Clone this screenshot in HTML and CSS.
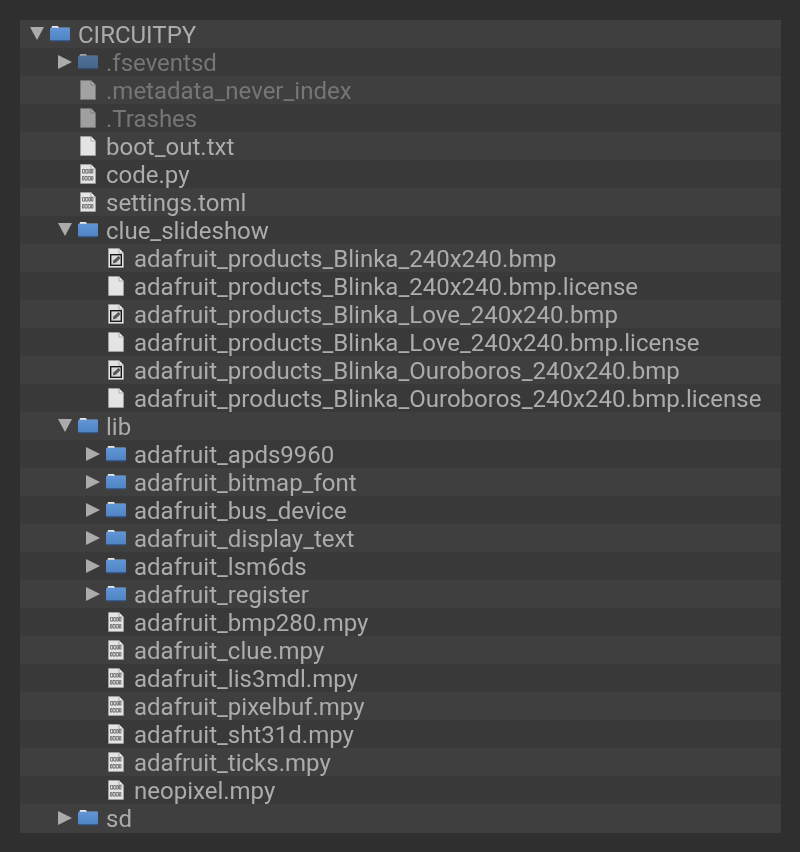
FILE: index.html
```html
<!DOCTYPE html>
<html lang="en">
<head>
<meta charset="utf-8">
<title>CIRCUITPY</title>
<link rel="stylesheet" href="styles.css">
</head>
<body>
<svg class="defs" width="0" height="0" aria-hidden="true">
  <defs>
    <linearGradient id="fg" x1="0" y1="0" x2="0" y2="1">
      <stop offset="0" stop-color="#6195d6"/>
      <stop offset="1" stop-color="#4f82c2"/>
    </linearGradient>
    <symbol id="folder" viewBox="0 0 20 16">
      <path d="M8 1h11a1 1 0 0 1 1 1v1H8z" fill="#6a6a6a"/>
      <path d="M2 0h6l1 2H1.500z" fill="#e6e6e6"/>
      <path d="M0 3a1.200 1.200 0 0 1 1.200-1.200h17.600A1.200 1.200 0 0 1 20 3v10.800a1.200 1.200 0 0 1-1.200 1.200H1.200A1.200 1.200 0 0 1 0 13.800z" fill="url(#fg)"/>
      <path d="M0 14.300h20a1.200 1.200 0 0 1-1.200 1.100H1.200A1.200 1.200 0 0 1 0 14.300z" fill="#30507c"/>
    </symbol>
    <symbol id="file" viewBox="0 0 16 20">
      <path d="M.5.500h10.300l4.700 4.700v14.300H.5z" fill="#e4e4e4" stroke="#a8a8a8" stroke-width=".6"/>
      <path d="M11 .5v4.500h4.500" fill="#f4f4f4" stroke="#9a9a9a" stroke-width=".8"/>
    </symbol>
    <symbol id="bin" viewBox="0 0 16 20">
      <path d="M.5.500h10.300l4.700 4.700v14.300H.5z" fill="#e4e4e4" stroke="#a8a8a8" stroke-width=".6"/>
      <path d="M11 .5v4.500h4.500" fill="#f4f4f4" stroke="#9a9a9a" stroke-width=".8"/>
      <path d="M2.500 5.500h2.200v3.600H2.500zM5.700 5.500h2.200v3.600H5.700zM8.900 5.500h1.500v3.600H8.900zM11.400 5.500h1.500v3.600h-1.500zM2.500 12.500h1.500v3.600H2.500zM5 12.500h2.200v3.600H5zM8.200 12.500h2.200v3.600H8.200zM11.400 12.500h1.500v3.600h-1.500z" fill="none" stroke="#666" stroke-width=".85"/>
    </symbol>
    <symbol id="img" viewBox="0 0 16 20">
      <path d="M.5.500h10.300l4.700 4.700v14.300H.5z" fill="#e4e4e4" stroke="#a8a8a8" stroke-width=".6"/>
      <path d="M11 .5v4.500h4.500" fill="#f4f4f4" stroke="#9a9a9a" stroke-width=".8"/>
      <rect x="2.700" y="6.700" width="10.600" height="10.600" fill="#d8d8d8" stroke="#0c0c0c" stroke-width="1.300"/>
      <path d="M4.800 15.400l.8-3.200L10.600 8l2 2-4.400 4.600z" fill="#555"/>
    </symbol>
  </defs>
</svg>
<ul class="tree">
  <li class="row l0"><span class="arrow down"></span><svg class="ico-folder"><use href="#folder"/></svg><span class="name">CIRCUITPY</span></li>
  <li class="row l1 hidden"><span class="arrow right"></span><svg class="ico-folder"><use href="#folder"/></svg><span class="name">.fseventsd</span></li>
  <li class="row l1 hidden"><span class="arrow"></span><svg class="ico-file"><use href="#file"/></svg><span class="name">.metadata_never_index</span></li>
  <li class="row l1 hidden"><span class="arrow"></span><svg class="ico-file"><use href="#file"/></svg><span class="name">.Trashes</span></li>
  <li class="row l1"><span class="arrow"></span><svg class="ico-file"><use href="#file"/></svg><span class="name">boot_out.txt</span></li>
  <li class="row l1"><span class="arrow"></span><svg class="ico-file"><use href="#bin"/></svg><span class="name">code.py</span></li>
  <li class="row l1"><span class="arrow"></span><svg class="ico-file"><use href="#bin"/></svg><span class="name">settings.toml</span></li>
  <li class="row l1"><span class="arrow down"></span><svg class="ico-folder"><use href="#folder"/></svg><span class="name">clue_slideshow</span></li>
  <li class="row l2"><span class="arrow"></span><svg class="ico-file"><use href="#img"/></svg><span class="name">adafruit_products_Blinka_240x240.bmp</span></li>
  <li class="row l2"><span class="arrow"></span><svg class="ico-file"><use href="#file"/></svg><span class="name">adafruit_products_Blinka_240x240.bmp.license</span></li>
  <li class="row l2"><span class="arrow"></span><svg class="ico-file"><use href="#img"/></svg><span class="name">adafruit_products_Blinka_Love_240x240.bmp</span></li>
  <li class="row l2"><span class="arrow"></span><svg class="ico-file"><use href="#file"/></svg><span class="name">adafruit_products_Blinka_Love_240x240.bmp.license</span></li>
  <li class="row l2"><span class="arrow"></span><svg class="ico-file"><use href="#img"/></svg><span class="name">adafruit_products_Blinka_Ouroboros_240x240.bmp</span></li>
  <li class="row l2"><span class="arrow"></span><svg class="ico-file"><use href="#file"/></svg><span class="name">adafruit_products_Blinka_Ouroboros_240x240.bmp.license</span></li>
  <li class="row l1"><span class="arrow down"></span><svg class="ico-folder"><use href="#folder"/></svg><span class="name">lib</span></li>
  <li class="row l2"><span class="arrow right"></span><svg class="ico-folder"><use href="#folder"/></svg><span class="name">adafruit_apds9960</span></li>
  <li class="row l2"><span class="arrow right"></span><svg class="ico-folder"><use href="#folder"/></svg><span class="name">adafruit_bitmap_font</span></li>
  <li class="row l2"><span class="arrow right"></span><svg class="ico-folder"><use href="#folder"/></svg><span class="name">adafruit_bus_device</span></li>
  <li class="row l2"><span class="arrow right"></span><svg class="ico-folder"><use href="#folder"/></svg><span class="name">adafruit_display_text</span></li>
  <li class="row l2"><span class="arrow right"></span><svg class="ico-folder"><use href="#folder"/></svg><span class="name">adafruit_lsm6ds</span></li>
  <li class="row l2"><span class="arrow right"></span><svg class="ico-folder"><use href="#folder"/></svg><span class="name">adafruit_register</span></li>
  <li class="row l2"><span class="arrow"></span><svg class="ico-file"><use href="#bin"/></svg><span class="name">adafruit_bmp280.mpy</span></li>
  <li class="row l2"><span class="arrow"></span><svg class="ico-file"><use href="#bin"/></svg><span class="name">adafruit_clue.mpy</span></li>
  <li class="row l2"><span class="arrow"></span><svg class="ico-file"><use href="#bin"/></svg><span class="name">adafruit_lis3mdl.mpy</span></li>
  <li class="row l2"><span class="arrow"></span><svg class="ico-file"><use href="#bin"/></svg><span class="name">adafruit_pixelbuf.mpy</span></li>
  <li class="row l2"><span class="arrow"></span><svg class="ico-file"><use href="#bin"/></svg><span class="name">adafruit_sht31d.mpy</span></li>
  <li class="row l2"><span class="arrow"></span><svg class="ico-file"><use href="#bin"/></svg><span class="name">adafruit_ticks.mpy</span></li>
  <li class="row l2"><span class="arrow"></span><svg class="ico-file"><use href="#bin"/></svg><span class="name">neopixel.mpy</span></li>
  <li class="row l1"><span class="arrow right"></span><svg class="ico-folder"><use href="#folder"/></svg><span class="name">sd</span></li>
</ul>
</body>
</html>
```
FILE: styles.css
```css
html, body { margin: 0; padding: 0; }
body {
  background: #2f2f2f;
  padding: 20px 19px 19px 20px;
  font-family: Roboto, sans-serif;
  font-size: 24px;
  color: #acacac;
}
.defs { position: absolute; }
.tree { list-style: none; margin: 0; padding: 0 0 1px; background: #3f3f3f; filter: blur(.35px); }
.row { display: flex; align-items: center; height: 28px; background: #3f3f3f; white-space: nowrap; }
.row:nth-child(even) { background: #393939; }
.l0 { padding-left: 10px; }
.l1 { padding-left: 38px; }
.l2 { padding-left: 66px; }
.arrow { width: 20px; height: 14px; flex: none; position: relative; }
.arrow.right::before {
  content: ""; position: absolute; left: 0; top: 0;
  border-left: 14px solid #ababab; border-top: 7px solid transparent; border-bottom: 7px solid transparent;
}
.arrow.down::before {
  content: ""; position: absolute; left: 0; top: 0;
  border-top: 13px solid #ababab; border-left: 7px solid transparent; border-right: 7px solid transparent;
}
.ico-folder { width: 20px; height: 16px; flex: none; margin-right: 8px; }
.ico-file { width: 16px; height: 20px; flex: none; margin: 0 10px 0 2px; }
.name { line-height: 28px; padding-top: 2px; }
.hidden .name { color: #767676; }
.hidden svg { opacity: .6; }
```
